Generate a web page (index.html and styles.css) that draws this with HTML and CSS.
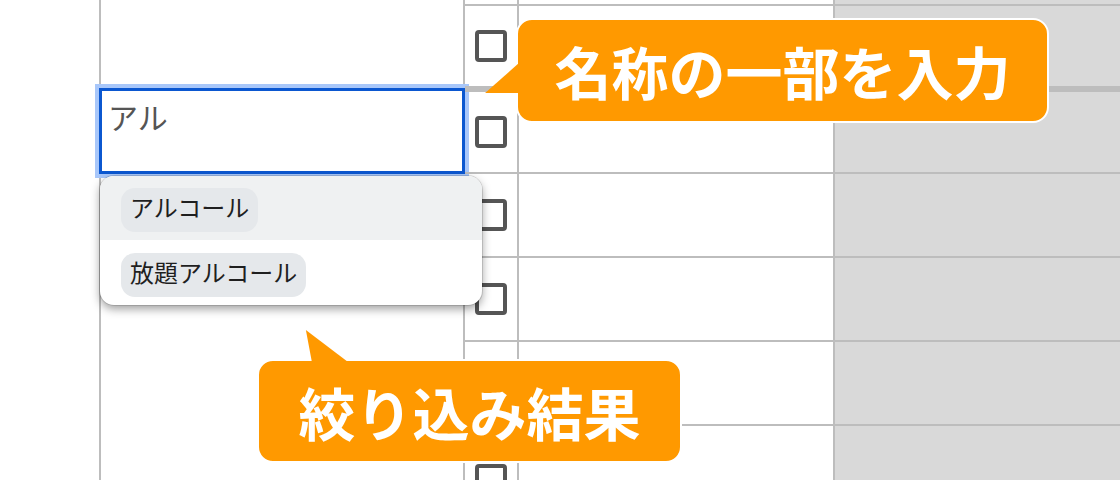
FILE: index.html
```html
<!DOCTYPE html>
<html lang="ja">
<head>
<meta charset="utf-8">
<title>絞り込み</title>
<link rel="stylesheet" href="styles.css">
</head>
<body>
<div class="sheet">
  <div class="gutter"></div>
  <div class="merged">
    <div class="field">アル</div>
  </div>
  <div class="rows">
    <div class="row r0"><div class="cell"></div><div class="cell"></div><div class="cell gray"></div></div>
    <div class="row r1"><div class="cell"><span class="box"></span></div><div class="cell"></div><div class="cell gray"></div></div>
    <div class="row r2"><div class="cell"><span class="box"></span></div><div class="cell"></div><div class="cell gray"></div></div>
    <div class="row"><div class="cell"><span class="box"></span></div><div class="cell"></div><div class="cell gray"></div></div>
    <div class="row"><div class="cell"><span class="box"></span></div><div class="cell"></div><div class="cell gray"></div></div>
    <div class="row"><div class="cell"><span class="box"></span></div><div class="cell"></div><div class="cell gray"></div></div>
    <div class="row r6"><div class="cell top"><span class="box"></span></div><div class="cell"></div><div class="cell gray"></div></div>
  </div>
</div>

<div class="dropdown">
  <div class="opt active"><span class="chip">アルコール</span></div>
  <div class="opt"><span class="chip">放題アルコール</span></div>
</div>

<div class="callout c1">名称の一部を入力</div>
<div class="callout c2">絞り込み結果</div>
</body>
</html>
```

FILE: styles.css
```css
* { box-sizing: border-box; }
html, body { margin: 0; padding: 0; }
body {
  width: 1120px;
  height: 480px;
  overflow: hidden;
  background: #fff;
  position: relative;
  font-family: "Noto Sans CJK JP", "Noto Sans", sans-serif;
}
.sheet { display: flex; height: 480px; overflow: hidden; }
.gutter { width: 99px; flex: none; }
.merged {
  width: 366px;
  flex: none;
  border-left: 2px solid #bdbdbd;
  border-right: 2px solid #bdbdbd;
  padding-top: 88px;
}
.field {
  margin: 0 -2px;
  height: 86px;
  border: 3px solid #0b57d0;
  box-shadow: 0 0 0 4px #a8c7fa;
  padding: 5px 6px 0;
  font-size: 30px;
  line-height: 40px;
  color: #555;
  background: #fff;
}
.rows { flex: 1; height: 480px; overflow: hidden; }
.row {
  display: grid;
  grid-template-columns: 54px 316px 1fr;
  height: 84px;
  border-bottom: 2px solid #bdbdbd;
}
.row.r0 { height: 6px; }
.row.r1 { height: 86px; border-bottom-width: 6px; }
.row.r2 { height: 82px; }
.row.r6 { height: 54px; border-bottom: none; }
.cell {
  border-right: 2px solid #bdbdbd;
  display: flex;
  align-items: center;
  justify-content: center;
}
.cell.top { align-items: flex-start; padding-top: 38px; overflow: hidden; }
.cell.gray { background: #d9d9d9; border-right: none; }
.box {
  flex: none;
  width: 32px;
  height: 32px;
  border: 4px solid #555;
  border-radius: 4px;
  background: #fff;
}
.dropdown {
  position: absolute;
  left: 100px;
  top: 176px;
  width: 382px;
  height: 129px;
  background: #fff;
  border-radius: 14px;
  overflow: hidden;
  box-shadow: 0 4px 10px rgba(0,0,0,0.38), 0 0 0 1px rgba(0,0,0,0.12);
}
.opt {
  height: 64px;
  padding: 12px 21px 0;
}
.opt + .opt { height: 65px; padding-top: 13px; }
.opt.active { background: #eff1f2; }
.chip {
  display: inline-block;
  height: 44px;
  padding: 0 9px;
  border-radius: 14px;
  background: #e5e8eb;
  color: #1f1f1f;
  font-size: 24px;
  line-height: 38px;
}
.callout {
  position: absolute;
  background: #ff9900;
  color: #fff;
  border: 2px solid #fff;
  border-radius: 16px;
  font-weight: 700;
  font-size: 57px;
  line-height: 1;
  display: flex;
  align-items: center;
  justify-content: center;
}
.callout::before {
  content: "";
  position: absolute;
  background: #ff9900;
}
.c1 { left: 516px; top: 18px; width: 533px; height: 105px; }
.c1::before {
  left: -34px;
  top: 44px;
  width: 36px;
  height: 29px;
  clip-path: polygon(94% 0, 3% 100%, 100% 100%, 100% 0);
}
.c2 { left: 257px; top: 359px; width: 425px; height: 104px; }
.c2::before {
  left: 46px;
  top: -32px;
  width: 43px;
  height: 33px;
  clip-path: polygon(2% 3%, 16% 100%, 100% 100%);
}
```
